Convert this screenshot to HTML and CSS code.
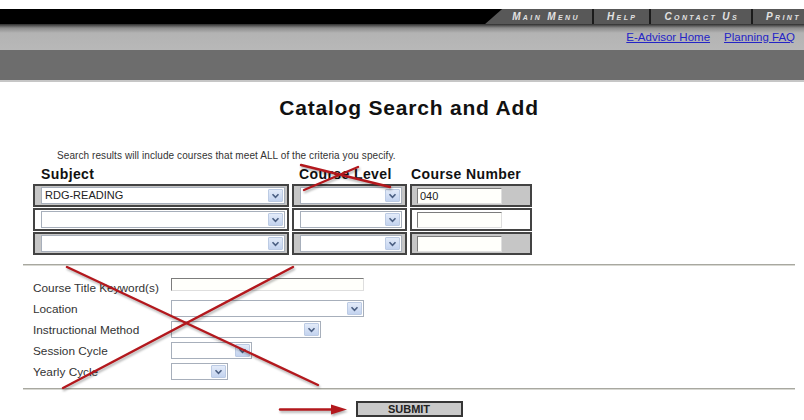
FILE: index.html
```html
<!DOCTYPE html>
<html lang="en">
<head>
<meta charset="utf-8">
<title>Catalog Search and Add</title>
<link rel="stylesheet" href="styles.css">
</head>
<body>
<header class="masthead">
  <nav class="topnav">
    <div class="tabs">
      <a class="tab" href="#">Main Menu</a>
      <a class="tab" href="#">Help</a>
      <a class="tab" href="#">Contact Us</a>
      <a class="tab" href="#">Print</a>
    </div>
  </nav>
  <div class="subnav">
    <a href="#">E-Advisor Home</a>
    <a href="#">Planning FAQ</a>
  </div>
  <div class="band"></div>
</header>

<main class="page">
  <h1>Catalog Search and Add</h1>
  <p class="intro">Search results will include courses that meet ALL of the criteria you specify.</p>

  <table class="criteria">
    <thead>
      <tr>
        <th class="h-subj">Subject</th>
        <th class="h-level">Course Level</th>
        <th class="h-num">Course Number</th>
      </tr>
    </thead>
    <tbody>
      <tr class="shade">
        <td class="subj"><div class="dd w-subj"><span class="dd-val">RDG-READING</span><span class="dd-btn"><svg viewBox="0 0 9 6" width="9" height="6"><path d="M1.5 1.2 L4.5 4.3 L7.5 1.2" /></svg></span></div></td>
        <td class="level"><div class="dd w-level"><span class="dd-val"></span><span class="dd-btn"><svg viewBox="0 0 9 6" width="9" height="6"><path d="M1.5 1.2 L4.5 4.3 L7.5 1.2" /></svg></span></div></td>
        <td class="num"><input class="txt w-num" type="text" value="040"></td>
      </tr>
      <tr>
        <td class="subj"><div class="dd w-subj"><span class="dd-val"></span><span class="dd-btn"><svg viewBox="0 0 9 6" width="9" height="6"><path d="M1.5 1.2 L4.5 4.3 L7.5 1.2" /></svg></span></div></td>
        <td class="level"><div class="dd w-level"><span class="dd-val"></span><span class="dd-btn"><svg viewBox="0 0 9 6" width="9" height="6"><path d="M1.5 1.2 L4.5 4.3 L7.5 1.2" /></svg></span></div></td>
        <td class="num"><input class="txt w-num" type="text" value=""></td>
      </tr>
      <tr class="shade">
        <td class="subj"><div class="dd w-subj"><span class="dd-val"></span><span class="dd-btn"><svg viewBox="0 0 9 6" width="9" height="6"><path d="M1.5 1.2 L4.5 4.3 L7.5 1.2" /></svg></span></div></td>
        <td class="level"><div class="dd w-level"><span class="dd-val"></span><span class="dd-btn"><svg viewBox="0 0 9 6" width="9" height="6"><path d="M1.5 1.2 L4.5 4.3 L7.5 1.2" /></svg></span></div></td>
        <td class="num"><input class="txt w-num" type="text" value=""></td>
      </tr>
    </tbody>
  </table>

  <hr class="rule">

  <div class="filters">
    <label>Course Title Keyword(s)</label>
    <input class="txt w-keyword" type="text" value="">

    <label>Location</label>
    <div class="dd w-location"><span class="dd-val"></span><span class="dd-btn"><svg viewBox="0 0 9 6" width="9" height="6"><path d="M1.5 1.2 L4.5 4.3 L7.5 1.2" /></svg></span></div>

    <label>Instructional Method</label>
    <div class="dd w-method"><span class="dd-val"></span><span class="dd-btn"><svg viewBox="0 0 9 6" width="9" height="6"><path d="M1.5 1.2 L4.5 4.3 L7.5 1.2" /></svg></span></div>

    <label>Session Cycle</label>
    <div class="dd w-session"><span class="dd-val"></span><span class="dd-btn"><svg viewBox="0 0 9 6" width="9" height="6"><path d="M1.5 1.2 L4.5 4.3 L7.5 1.2" /></svg></span></div>

    <label>Yearly Cycle</label>
    <div class="dd w-yearly"><span class="dd-val"></span><span class="dd-btn"><svg viewBox="0 0 9 6" width="9" height="6"><path d="M1.5 1.2 L4.5 4.3 L7.5 1.2" /></svg></span></div>
  </div>

  <hr class="rule rule-low">

  <div class="actions">
    <button class="submit" type="button">SUBMIT</button>
  </div>
</main>

<!-- hand-drawn red markup over the form -->
<svg class="marks" width="804" height="420" viewBox="0 0 804 420">
  <g class="ink">
    <line x1="301" y1="165" x2="390" y2="187" />
    <line x1="304" y1="190" x2="358" y2="167" />
    <line x1="67" y1="267" x2="318" y2="385" />
    <line x1="293" y1="267" x2="63" y2="388" />
    <line x1="280" y1="409.5" x2="334" y2="409.5" />
    <polygon points="331,404.5 347,409.5 331,414.5" />
  </g>
</svg>
</body>
</html>
```

FILE: styles.css
```css
* {
  box-sizing: border-box;
}

html,
body {
  margin: 0;
  padding: 0;
  background: #fff;
}

body {
  position: relative;
  width: 804px;
  min-height: 420px;
  overflow: hidden;
  font-family: "Liberation Sans", Arial, sans-serif;
  color: #222;
}

/* ---------- masthead ---------- */
.masthead {
  padding-top: 9px;
}

.topnav {
  display: flex;
  justify-content: flex-end;
  height: 15px;
  background: #000;
}

.tabs {
  display: flex;
  padding-left: 14px;
  background: #585858;
  clip-path: polygon(17px 0, 100% 0, 100% 100%, 0 100%);
}

.tab {
  display: block;
  padding: 0 12px 0 13px;
  border-left: 2px solid #1b1b1b;
  font-size: 10px;
  font-weight: bold;
  font-style: italic;
  font-variant: small-caps;
  letter-spacing: 2.4px;
  line-height: 15px;
  color: #e2e2e2;
  text-decoration: none;
  white-space: nowrap;
}

.tab:first-child {
  border-left: 0;
}

.tab:last-child {
  padding-right: 3px;
}

.subnav {
  display: flex;
  justify-content: flex-end;
  gap: 14px;
  height: 26px;
  padding: 7px 9px 0 0;
  background: linear-gradient(#2e2e2e 0, #8c8c8c 4px, #b3b3b3 9px, #b8b8b8 100%);
  font-size: 11.5px;
  line-height: 13px;
}

.subnav a {
  color: #2424c6;
  text-decoration: underline;
}

.band {
  height: 32px;
  background: #6d6d6d;
  border-bottom: 2px solid #c6c6c6;
}

/* ---------- page body ---------- */
.page {
  margin: 0 9px 0 23px;
}

h1 {
  margin: 14px 0 0;
  font-size: 21px;
  line-height: 24px;
  letter-spacing: 0.8px;
  text-align: center;
  color: #111;
}

.intro {
  margin: 30px 0 0 34px;
  font-size: 10px;
  line-height: 12px;
  letter-spacing: 0.08px;
  color: #333;
}

/* ---------- criteria table ---------- */
.criteria {
  margin: 3px 0 0 7px;
  border-collapse: separate;
  border-spacing: 3px 1px;
}

.criteria th {
  padding: 0 0 1px;
  font-size: 14px;
  line-height: 16px;
  letter-spacing: 0.4px;
  text-align: left;
  color: #111;
  white-space: nowrap;
}

.criteria .h-subj {
  padding-left: 8px;
}

.criteria .h-level {
  padding-left: 7px;
}

.criteria .h-num {
  padding-left: 1px;
}

.criteria td {
  padding: 1px 0;
  border: 2px solid #434343;
  vertical-align: middle;
  background: #fff;
}

.criteria .shade td {
  background: #c6c6c6;
}

.criteria td.subj {
  padding-left: 6px;
  padding-right: 2px;
}

.criteria td.level {
  padding-left: 6px;
  padding-right: 3px;
}

.criteria td.num {
  padding-left: 5px;
  padding-right: 28px;
}

/* ---------- form controls ---------- */
.dd {
  display: flex;
  align-items: center;
  height: 17px;
  border: 1px solid #a7afbb;
  background: #fff;
  font-size: 11px;
}

.dd-val {
  flex: 1;
  padding-left: 3px;
  line-height: 15px;
  color: #222;
  white-space: nowrap;
}

.dd-btn {
  display: flex;
  align-items: center;
  justify-content: center;
  width: 15px;
  height: 13px;
  margin-right: 1px;
  border: 1px solid #bccbe4;
  border-radius: 1px;
  background: linear-gradient(#e3ebf9, #c3d3ef);
}

.dd-btn path {
  fill: none;
  stroke: #4b5f82;
  stroke-width: 1.6;
}

.txt {
  display: block;
  margin: 0;
  padding: 0 0 0 2px;
  height: 16px;
  border: 1px solid;
  border-color: #7c7c7c #dedede #dedede #7c7c7c;
  background: #fffffb;
  font: 11px "Liberation Sans", Arial, sans-serif;
  color: #222;
  outline: none;
}

.w-subj { width: 244px; }
.w-level { width: 102px; }
.w-num { width: 85px; }
.w-keyword { width: 193px; height: 13px; align-self: start; margin-top: -1px; }
.w-location { width: 193px; }
.w-method { width: 150px; }
.w-session { width: 81px; }
.w-yearly { width: 57px; }

/* ---------- rules ---------- */
.rule {
  height: 0;
  margin: 8px 0 0;
  border: 0;
  border-top: 1px solid #a8a8a0;
  border-bottom: 1px solid #d8d8d2;
}

.rule-low {
  margin-top: 8px;
}

/* ---------- optional filters ---------- */
.filters {
  display: grid;
  grid-template-columns: 138px auto;
  grid-auto-rows: 17px;
  row-gap: 4px;
  align-items: center;
  justify-items: start;
  margin: 13px 0 0 10px;
  font-size: 11.8px;
  color: #333;
}

.filters label {
  white-space: nowrap;
}

/* ---------- submit ---------- */
.actions {
  display: flex;
  justify-content: center;
  margin-top: 11px;
}

.submit {
  width: 107px;
  height: 16px;
  padding: 0;
  border: 2px solid #363636;
  background: #c9c9c9;
  font: bold 11px/12px "Liberation Sans", Arial, sans-serif;
  color: #222;
}

/* ---------- red markup ---------- */
.marks {
  position: absolute;
  top: 0;
  left: 0;
  pointer-events: none;
}

.ink {
  filter: drop-shadow(1px 2px 1px rgba(0, 0, 0, 0.3));
}

.ink line {
  stroke: #b3181d;
  stroke-width: 2.4;
  stroke-linecap: round;
}

.ink polygon {
  fill: #b3181d;
}
```
